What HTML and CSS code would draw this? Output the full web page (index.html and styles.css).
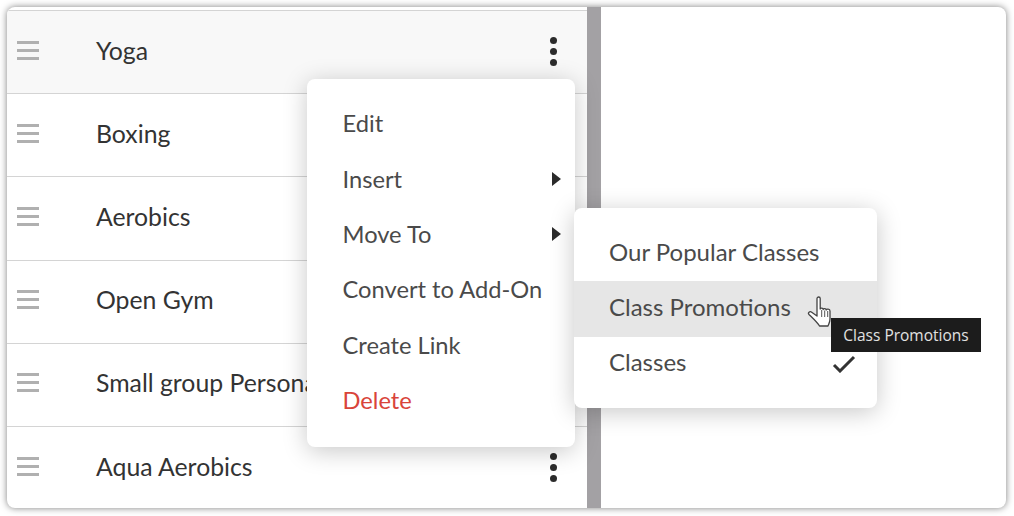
FILE: index.html
```html
<!DOCTYPE html>
<html lang="en">
<head>
<meta charset="UTF-8">
<meta name="viewport" content="width=device-width, initial-scale=1.0">
<title>Classes</title>
<link rel="stylesheet" href="styles.css">
</head>
<body>
<div class="card">
  <div class="list">
    <div class="row row-active">
      <span class="grip"><i></i><i></i><i></i></span>
      <span class="name">Yoga</span>
      <span class="dots"><i></i><i></i><i></i></span>
    </div>
    <div class="row">
      <span class="grip"><i></i><i></i><i></i></span>
      <span class="name">Boxing</span>
    </div>
    <div class="row">
      <span class="grip"><i></i><i></i><i></i></span>
      <span class="name">Aerobics</span>
    </div>
    <div class="row">
      <span class="grip"><i></i><i></i><i></i></span>
      <span class="name">Open Gym</span>
    </div>
    <div class="row">
      <span class="grip"><i></i><i></i><i></i></span>
      <span class="name name-cut">Small group Personal Training</span>
    </div>
    <div class="row">
      <span class="grip"><i></i><i></i><i></i></span>
      <span class="name">Aqua Aerobics</span>
      <span class="dots"><i></i><i></i><i></i></span>
    </div>
  </div>
  <div class="divider"></div>
  <div class="pane"></div>
</div>

<div class="menu menu-main">
  <div class="menu-item">Edit</div>
  <div class="menu-item">Insert<span class="arrow"></span></div>
  <div class="menu-item">Move To<span class="arrow"></span></div>
  <div class="menu-item">Convert to Add-On</div>
  <div class="menu-item">Create Link</div>
  <div class="menu-item menu-delete">Delete</div>
</div>

<div class="menu menu-sub">
  <div class="menu-item">Our Popular Classes</div>
  <div class="menu-item menu-hover">Class Promotions</div>
  <div class="menu-item">Classes
    <svg class="check" width="24" height="18" viewBox="0 0 24 18"><path d="M2 10l6 6L22 2" fill="none" stroke="#333" stroke-width="3"/></svg>
  </div>
</div>

<div class="tooltip">Class Promotions</div>

<svg class="cursor" width="27" height="34" viewBox="0 0 27 34">
  <path d="M10 3.500c0-2 3.200-2 3.200 0V14c0-1.200 3-1.200 3 .5 0-1.200 3-1.200 3 .5 0-1.200 3.800-1.200 3.800 1V24c0 3-1 4.500-2 7H12.500C10 27 5 22.500 2 19.500c-1.500-1.700.7-3.800 2.700-2.300L10 21z" fill="#fff" stroke="#444" stroke-width="1.300" stroke-linejoin="round"/>
  <path d="M14.700 15v7M17.700 15.500V22M20.700 16v6" stroke="#555" stroke-width="1" fill="none"/>
</svg>
</body>
</html>
```

FILE: styles.css
```css
body {
  margin: 0;
  height: 516px;
  overflow: hidden;
  background-color: #fff;
  font-family: Lato, "Liberation Sans", sans-serif;
  color: #333;
}
.card {
  display: flex;
  margin: 7px 8px 0 7px;
  height: 501px;
  background-color: #fff;
  border-radius: 8px;
  overflow: hidden;
  box-shadow: 0 0 7px rgba(0, 0, 0, 0.5);
}
.list {
  width: 580px;
  padding-top: 3px;
}
.row {
  display: flex;
  align-items: center;
  height: 78.2px;
  padding: 0 30px 4px 10px;
  border-top: 1px solid #d4d4d4;
  font-size: 24.8px;
}
.row-active {
  background-color: #f8f8f8;
}
.grip {
  display: flex;
  flex-direction: column;
  gap: 5px;
  width: 22px;
  margin-right: 57px;
}
.grip i {
  height: 3px;
  background-color: #b0b0b0;
}
.name {
  flex: 1;
  white-space: nowrap;
}
.name-cut {
  overflow: hidden;
  margin-right: 250px;
}
.dots {
  display: flex;
  flex-direction: column;
  gap: 4px;
  margin: 2px 0 0 10px;
}
.dots i {
  width: 7px;
  height: 7px;
  border-radius: 50%;
  background-color: #2b2b2b;
}
.divider {
  width: 14px;
  background-color: #a3a1a4;
}
.pane {
  flex: 1;
}
.menu {
  position: absolute;
  background-color: #fff;
  border-radius: 8px;
  box-shadow: 0 4px 24px rgba(0, 0, 0, 0.22);
  color: #4a4a4a;
}
.menu-main {
  left: 307px;
  top: 79px;
  width: 268px;
  padding: 17px 0 19px;
  font-size: 23.7px;
}
.menu-main .menu-item {
  padding-left: 35.5px;
}
.menu-sub {
  left: 574px;
  top: 208px;
  width: 303px;
  padding: 18px 0 16px;
  font-size: 24px;
}
.menu-sub .menu-item {
  padding-bottom: 5px;
}
.menu-item {
  position: relative;
  display: flex;
  align-items: center;
  box-sizing: border-box;
  height: 55.4px;
  padding: 0 0 1px 35px;
  white-space: nowrap;
}
.menu-delete {
  color: #d9443a;
}
.menu-hover {
  background-color: #e6e6e6;
}
.arrow {
  position: absolute;
  right: 14px;
  top: 20.5px;
  border-left: 9px solid #2b2b2b;
  border-top: 7px solid transparent;
  border-bottom: 7px solid transparent;
}
.check {
  position: absolute;
  right: 21px;
  top: 18px;
}
.tooltip {
  position: absolute;
  left: 831px;
  top: 318px;
  width: 150px;
  height: 34px;
  line-height: 34px;
  text-align: center;
  background-color: #1c1c1c;
  color: #e2e2e2;
  font-family: "Open Sans", sans-serif;
  font-size: 15.5px;
}
.cursor {
  position: absolute;
  left: 807px;
  top: 295px;
}
```
